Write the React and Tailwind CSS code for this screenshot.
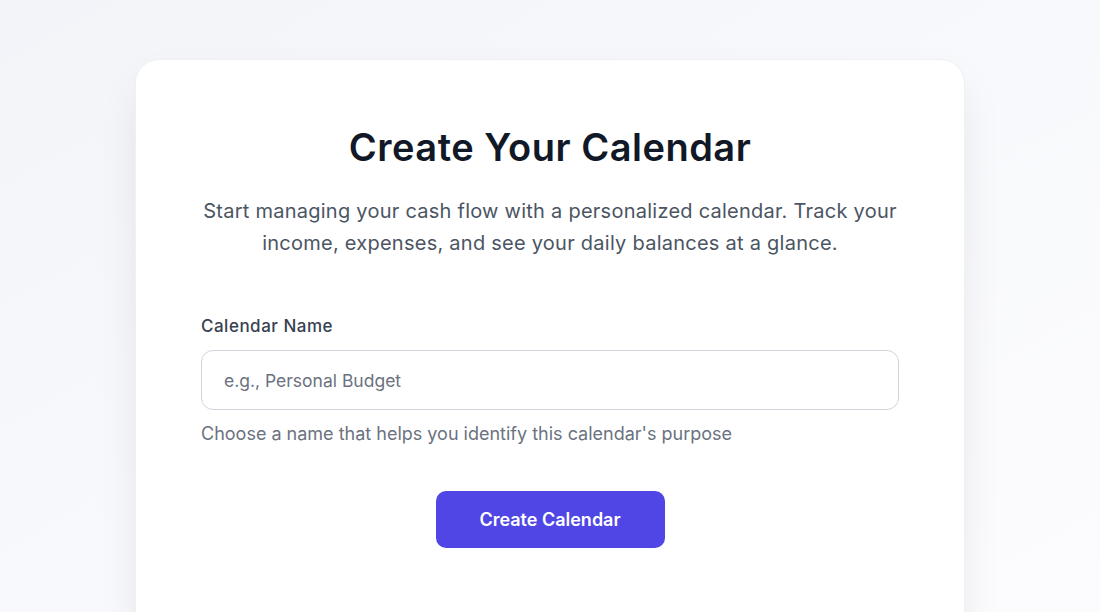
import React, { useState } from "react";

const FONT = { fontFamily: "Inter, 'Noto Sans', sans-serif" };

export default function App() {
  const [name, setName] = useState("");

  return (
    <div
      className="h-[612px] w-full bg-gradient-to-br from-[#f2f4f9] via-[#f8f9fc] to-[#fcfcfe] pt-[59px] overflow-hidden"
      style={FONT}
    >
      <div className="mx-auto w-[830px] rounded-3xl border border-[#eef0f4] bg-white px-[65px] pt-[67px] pb-24 shadow-[0_20px_50px_-12px_rgba(15,23,42,0.12)]">
        {/* Header */}
        <h1 className="text-center text-[38px] leading-10 font-semibold tracking-[0.5px] text-[#111827]">
          Create Your Calendar
        </h1>
        <p className="mx-auto mt-7 max-w-[710px] text-center text-[20px] leading-8 tracking-[0.25px] text-[#4b5563]">
          Start managing your cash flow with a personalized calendar. Track your
          income, expenses, and see your daily balances at a glance.
        </p>

        {/* Form */}
        <div className="mt-[55px]">
          <label className="block text-[17px] leading-6 font-medium tracking-[0.5px] text-[#374151]">
            Calendar Name
          </label>
          <input
            type="text"
            value={name}
            onChange={(e) => setName(e.target.value)}
            placeholder="e.g., Personal Budget"
            className="mt-3 block h-[60px] w-full rounded-xl border border-[#d1d5db] px-[22px] text-[17.5px] text-[#111827] placeholder:text-[#6b7280] outline-none"
          />
          <p className="mt-3 text-[18px] leading-6 text-[#6b7280]">
            Choose a name that helps you identify this calendar's purpose
          </p>
        </div>

        <div className="mt-[45px] flex justify-center">
          <button className="h-[57px] w-[229px] rounded-[10px] bg-[#4f46e5] text-[18px] font-semibold text-white">
            Create Calendar
          </button>
        </div>
      </div>
    </div>
  );
}
